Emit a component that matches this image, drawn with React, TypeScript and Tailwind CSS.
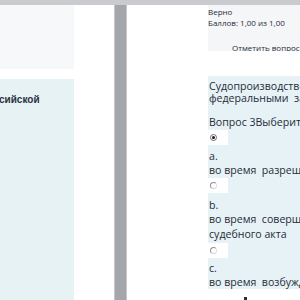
// Quiz review page fragment — left nav column, scrollbar, question panel
function Radio({ checked }: { checked?: boolean }) {
  return (
    <div className="h-[15px] w-[20px] bg-white flex items-center pl-[2px]">
      {checked ? (
        <span className="flex h-[7px] w-[7px] items-center justify-center rounded-full border border-[#6b6e73] bg-white">
          <span className="h-[3px] w-[3px] rounded-full bg-[#1a1a1a]" />
        </span>
      ) : (
        <span className="h-[7px] w-[7px] rounded-full border border-[#8d9094] border-r-[#e0e0e0] border-b-[#d0d0d0] bg-white" />
      )}
    </div>
  )
}

export default function App() {
  return (
    <div className="h-[300px] w-[300px] overflow-hidden bg-white flex flex-col">
      {/* top strip */}
      <div className="h-[5px] shrink-0 bg-[#c9cbce]" />

      <div className="flex flex-1 min-h-0">
        {/* ── left column ── */}
        <div className="w-[74px] shrink-0 flex flex-col">
          <div className="h-[64px] bg-[#f6f8fa]" />
          <div className="h-[10px]" />
          <div className="flex-1 bg-[#e6f2f4] overflow-hidden">
            <div
              className="mt-[15px] -ml-[1px] whitespace-nowrap text-[10px] font-bold leading-[12px] text-[#2a3140]"
              style={{ fontFamily: '"Liberation Sans", Arial, sans-serif' }}
            >
              сийской
            </div>
          </div>
        </div>

        <div className="w-[40px] shrink-0" />

        {/* ── scrollbar ── */}
        <div className="w-[13px] shrink-0 border-x border-[#c4c6c9] bg-[#a3a6aa]" />

        <div className="w-[81px] shrink-0" />

        {/* ── right column ── */}
        <div
          className="w-[92px] shrink-0 flex flex-col whitespace-nowrap text-[#272c38]"
          style={{ fontFamily: '"Open Sans", sans-serif' }}
        >
          <div className="h-[46px] shrink-0 bg-[#f5f6f8] overflow-hidden text-[8px] leading-[11px]">
            <div className="pt-[1px]">Верно</div>
            <div>Баллов: 1,00 из 1,00</div>
            <div className="mt-[14px] pl-[24px]">Отметить вопрос</div>
          </div>

          <div className="h-[25px] shrink-0" />

          <div className="h-[213px] shrink-0 bg-[#e6f2f5] overflow-hidden text-[10.6px] leading-[12px] pl-[1px]">
            <div className="pt-[4px]">Судопроизводство</div>
            <div>федеральными&nbsp;&nbsp;законами</div>
            <div className="mt-[12px]">Вопрос 3Выберите</div>
            <div className="-ml-[1px] mt-[2px]">
              <Radio checked />
            </div>
            <div className="mt-[4px] leading-[14px]">a.</div>
            <div className="leading-[15px]">во время&nbsp;&nbsp;разрешения</div>
            <div className="-ml-[1px]">
              <Radio />
            </div>
            <div className="mt-[5px] leading-[14px]">b.</div>
            <div className="leading-[15px]">во время&nbsp;&nbsp;совершения</div>
            <div className="leading-[14px]">судебного акта</div>
            <div className="-ml-[1px] mt-[2px]">
              <Radio />
            </div>
            <div className="mt-[3px] leading-[14px]">c.</div>
            <div className="leading-[15px]">во время&nbsp;&nbsp;возбуждения</div>
          </div>

          <div className="relative flex-1">
            <span className="absolute left-[36px] top-[8px] h-[3px] w-[3px] bg-[#2b303b]" />
          </div>
        </div>
      </div>
    </div>
  )
}
